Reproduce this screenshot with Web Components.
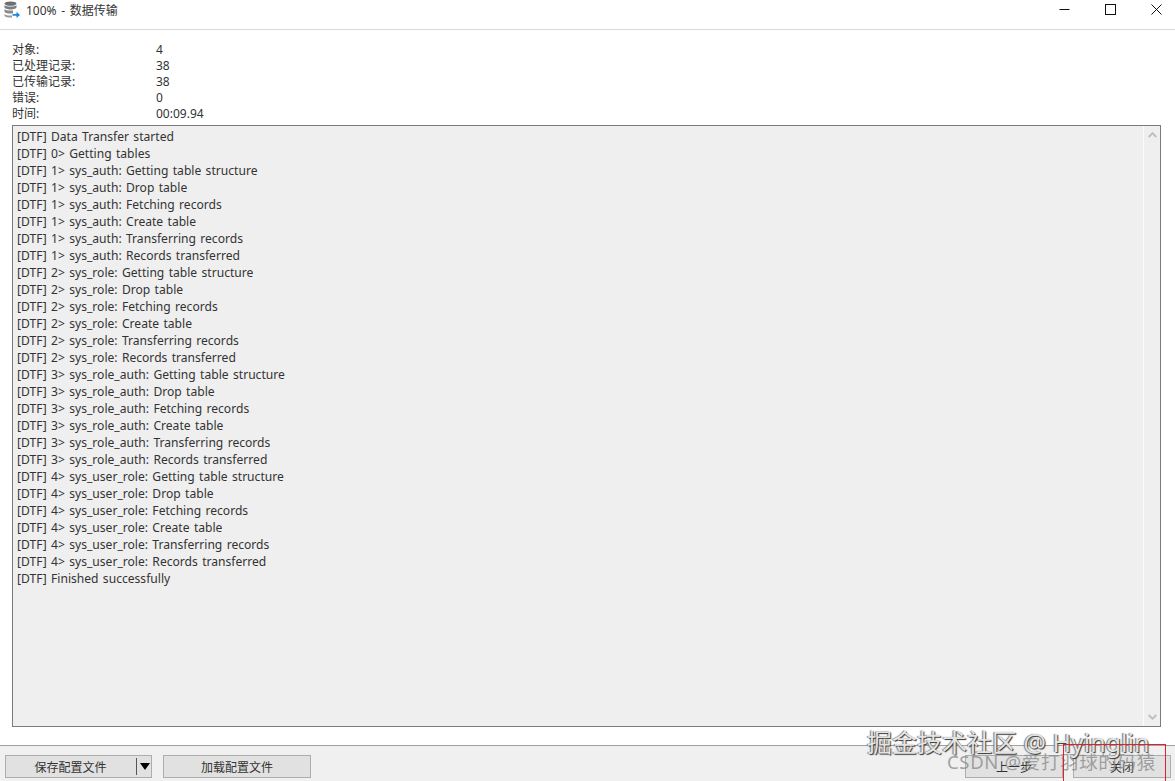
<!DOCTYPE html>
<html lang="zh">
<head>
<meta charset="utf-8">
<title>100% - 数据传输</title>
<style>
  html, body { margin: 0; height: 100%; overflow: hidden; background: #fff; }
  body { font: 12.1px "Noto Sans", "Noto Sans CJK SC", sans-serif; color: #222; }
</style>
</head>
<body>
<transfer-window>
  <title-bar slot="title">100% - 数据传输</title-bar>
  <info-row label="对象:">4</info-row>
  <info-row label="已处理记录:">38</info-row>
  <info-row label="已传输记录:">38</info-row>
  <info-row label="错误:">0</info-row>
  <info-row label="时间:">00:09.94</info-row>
  <log-view slot="log">[DTF] Data Transfer started
[DTF] 0&gt; Getting tables
[DTF] 1&gt; sys_auth: Getting table structure
[DTF] 1&gt; sys_auth: Drop table
[DTF] 1&gt; sys_auth: Fetching records
[DTF] 1&gt; sys_auth: Create table
[DTF] 1&gt; sys_auth: Transferring records
[DTF] 1&gt; sys_auth: Records transferred
[DTF] 2&gt; sys_role: Getting table structure
[DTF] 2&gt; sys_role: Drop table
[DTF] 2&gt; sys_role: Fetching records
[DTF] 2&gt; sys_role: Create table
[DTF] 2&gt; sys_role: Transferring records
[DTF] 2&gt; sys_role: Records transferred
[DTF] 3&gt; sys_role_auth: Getting table structure
[DTF] 3&gt; sys_role_auth: Drop table
[DTF] 3&gt; sys_role_auth: Fetching records
[DTF] 3&gt; sys_role_auth: Create table
[DTF] 3&gt; sys_role_auth: Transferring records
[DTF] 3&gt; sys_role_auth: Records transferred
[DTF] 4&gt; sys_user_role: Getting table structure
[DTF] 4&gt; sys_user_role: Drop table
[DTF] 4&gt; sys_user_role: Fetching records
[DTF] 4&gt; sys_user_role: Create table
[DTF] 4&gt; sys_user_role: Transferring records
[DTF] 4&gt; sys_user_role: Records transferred
[DTF] Finished successfully</log-view>
  <footer-bar slot="footer">
    <win-button style="width:147px" split>保存配置文件</win-button>
    <win-button style="width:148px; margin-left:11px">加载配置文件</win-button>
    <win-button style="width:98px; margin-left:auto">上一步</win-button>
    <win-button style="width:98px; margin-left:10px">关闭</win-button>
  </footer-bar>
  <photo-marks slot="marks"></photo-marks>
</transfer-window>

<script>
  customElements.define(
    "transfer-window",
    class TransferWindow extends HTMLElement {
      constructor() {
        super();
        this.attachShadow({ mode: "open" }).innerHTML = `
          <style>
            :host { display: flex; flex-direction: column; position: relative; height: 781px; overflow: hidden; background: #fff; }
            .info { padding: 12px 12px 3px; }
          </style>
          <slot name="title"></slot>
          <div class="info"><slot></slot></div>
          <slot name="log"></slot>
          <slot name="footer"></slot>
          <slot name="marks"></slot>`;
      }
    }
  );

  customElements.define(
    "title-bar",
    class TitleBar extends HTMLElement {
      constructor() {
        super();
        this.attachShadow({ mode: "open" }).innerHTML = `
          <style>
            :host { display: flex; align-items: center; flex: none; box-sizing: border-box; height: 30px; padding: 0 13px 10px 4px; border-bottom: 1px solid #d9d9d9; font-size: 12px; color: #333; }
            .icon { width: 16px; height: 17px; flex: none; margin-right: 6px; }
            .text { flex: 1; word-spacing: 1.5px; }
            .ctrl { display: flex; gap: 35px; }
            .ctrl svg { width: 11px; height: 11px; display: block; }
          </style>
          <svg class="icon" viewBox="0 0 16 17">
            <ellipse cx="6.5" cy="2.6" rx="6" ry="2.2" fill="#6e6e6e"/>
            <path d="M.5 4v2.2c0 1.2 2.7 2.2 6 2.2s6-1 6-2.2V4c-1 1-3.2 1.6-6 1.6S1.5 5 .5 4z" fill="#7d7d7d"/>
            <path d="M.5 8v2.4c0 1.2 2.7 2.2 6 2.2 1 0 1.8-.1 2.5-.2V9.400c-.8.1-1.600.2-2.500.2-2.800 0-5-.6-6-1.600z" fill="#8a8a8a"/>
            <path d="M.5 12v2.4c0 1.2 2.7 2.2 6 2.2.5 0 1 0 1.500-.1v-2c-.5 0-1 .1-1.500.1-2.800 0-5-.6-6-1.600z" fill="#9a9a9a"/>
            <path d="M8.500 13h4V10.800l3.500 3.200-3.500 3v-2.200h-4z" fill="#1e88d8"/>
          </svg>
          <span class="text"><slot></slot></span>
          <div class="ctrl">
            <svg viewBox="0 0 11 11"><path d="M.5 5.500h10" stroke="#111" fill="none"/></svg>
            <svg viewBox="0 0 11 11"><rect x=".5" y=".5" width="10" height="10" stroke="#111" fill="none"/></svg>
            <svg viewBox="0 0 11 11"><path d="M.5.500l10 10M10.500.500l-10 10" stroke="#111" fill="none"/></svg>
          </div>`;
      }
    }
  );

  customElements.define(
    "info-row",
    class InfoRow extends HTMLElement {
      constructor() {
        super();
        this.attachShadow({ mode: "open" }).innerHTML = `
          <style>
            :host { display: grid; grid-template-columns: 144px 1fr; height: 16px; line-height: 16px; font-size: 12px; color: #333; }
          </style>
          <span>${this.getAttribute("label")}</span>
          <span><slot></slot></span>`;
      }
    }
  );

  customElements.define(
    "log-view",
    class LogView extends HTMLElement {
      constructor() {
        super();
        this.attachShadow({ mode: "open" }).innerHTML = `
          <style>
            :host { display: flex; flex: 1; min-height: 0; margin: 0 14px 18px 12px; border: 1px solid #7b7b7b; background: #efefef; color: #333; }
            .text { flex: 1; padding: 2px 4px; line-height: 17px; word-spacing: 1.2px; white-space: pre-line; overflow: hidden; }
            .bar { display: flex; flex-direction: column; justify-content: space-between; box-sizing: border-box; width: 17px; flex: none; padding: 6px 0; border-left: 1px solid #fbfbfb; }
            .bar svg { width: 9px; height: 6px; display: block; margin: 0 auto; }
          </style>
          <div class="text"><slot></slot></div>
          <div class="bar">
            <svg viewBox="0 0 9 6"><path d="M.7 5L4.500 1.200 8.300 5" stroke="#bcbcbc" stroke-width="1.800" fill="none"/></svg>
            <svg viewBox="0 0 9 6"><path d="M.7 1l3.800 3.800L8.300 1" stroke="#bcbcbc" stroke-width="1.800" fill="none"/></svg>
          </div>`;
      }
    }
  );

  customElements.define(
    "footer-bar",
    class FooterBar extends HTMLElement {
      constructor() {
        super();
        this.attachShadow({ mode: "open" }).innerHTML = `
          <style>
            :host { display: flex; flex: none; box-sizing: border-box; height: 36px; padding: 9px 4px 0 5px; border-top: 1px solid #a0a0a0; background: #f0f0f0; }
          </style>
          <slot></slot>`;
      }
    }
  );

  customElements.define(
    "win-button",
    class WinButton extends HTMLElement {
      constructor() {
        super();
        let arrow = this.hasAttribute("split")
          ? `<span class="sep"></span><span class="arrow"></span>`
          : "";
        this.attachShadow({ mode: "open" }).innerHTML = `
          <style>
            :host { display: flex; align-items: center; box-sizing: border-box; height: 23px; border: 1px solid #adadad; background: #e1e1e1; font-size: 12px; color: #333; }
            .label { flex: 1; text-align: center; }
            .sep { width: 1px; height: 17px; background: #555; margin-left: 1px; }
            .arrow { width: 0; height: 0; margin: 0 1px 0 3px; border: solid transparent; border-width: 7px 5.5px 0; border-top-color: #000; }
          </style>
          <span class="label"><slot></slot></span>${arrow}`;
      }
    }
  );

  customElements.define(
    "photo-marks",
    class PhotoMarks extends HTMLElement {
      constructor() {
        super();
        this.attachShadow({ mode: "open" }).innerHTML = `
          <style>
            :host { display: block; }
            .red { position: absolute; left: 1063px; top: 744px; width: 101px; height: 60px; border: 1px solid #e0202c; }
            .juejin { position: absolute; left: 867px; top: 725px; font-size: 25px; line-height: 34px; white-space: nowrap; color: #e4e4e4; text-shadow: 1px 1px 1px #333, -1px 0 1px #777; }
            .csdn { position: absolute; left: 947px; top: 748px; font-size: 18.5px; letter-spacing: .65px; line-height: 28px; white-space: nowrap; color: rgba(140,140,140,.8); }
          </style>
          <div class="csdn">CSDN @爱打羽球的码猿</div>
          <div class="juejin">掘金技术社区 @ Hyinglin</div>
          <div class="red"></div>`;
      }
    }
  );
</script>
</body>
</html>
